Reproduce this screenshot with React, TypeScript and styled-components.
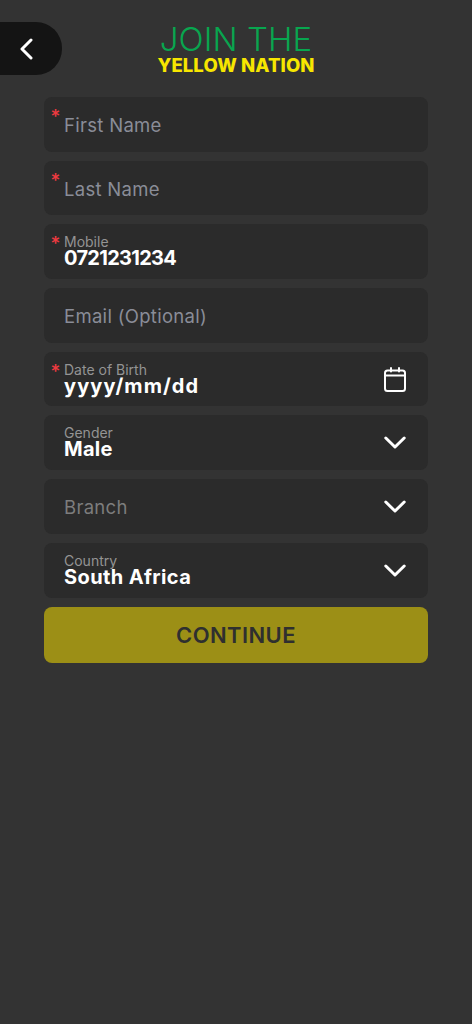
import styled, { createGlobalStyle } from "styled-components";

const GlobalStyle = createGlobalStyle`
  html, body {
    margin: 0;
    padding: 0;
    background: #333333;
  }
  * {
    box-sizing: border-box;
  }
`;

const Page = styled.div`
  width: 472px;
  height: 1024px;
  background: #333333;
  font-family: Inter, "Liberation Sans", sans-serif;
  overflow: hidden;
  padding-top: 22px;
`;

const Header = styled.header`
  position: relative;
  height: 75px;
  display: flex;
  flex-direction: column;
  align-items: center;
`;

const BackButton = styled.button`
  position: absolute;
  left: 0;
  top: 0;
  width: 62px;
  height: 53px;
  background: #141414;
  border: 0;
  border-radius: 0 26px 26px 0;
  display: flex;
  align-items: center;
  padding: 0 0 0 19px;
`;

const Join = styled.h1`
  margin: -1px 0 0;
  color: #08a64f;
  font-size: 33px;
  line-height: 36px;
  font-weight: 300;
  letter-spacing: 0.1px;
`;

const Nation = styled.h2`
  margin: -1px 0 0;
  color: #f7e600;
  font-size: 18.5px;
  line-height: 18px;
  font-weight: 800;
  letter-spacing: 0.1px;
`;

const Form = styled.form`
  margin: 0 44px;
  display: flex;
  flex-direction: column;
  gap: 9px;
`;

const Field = styled.div`
  position: relative;
  height: 54.7px;
  background: #2b2b2b;
  border-radius: 8px;
  padding-left: 20px;
  padding-right: 22px;
  display: flex;
  align-items: center;
  justify-content: space-between;
`;

const Star = styled.span`
  position: absolute;
  left: 6.5px;
  top: 10px;
  color: #ee3a40;
  font-size: 19px;
  line-height: 20px;
  font-weight: 500;
`;

const Placeholder = styled.span<{ $dim?: boolean }>`
  color: ${(p) => (p.$dim ? "#7d7d7d" : "#8a8d98")};
  font-size: 18.5px;
  letter-spacing: 0.3px;
  padding-top: 2px;
`;

const Stack = styled.div`
  display: flex;
  flex-direction: column;
`;

const Label = styled.span`
  color: #949494;
  font-size: 14px;
  line-height: 14px;
`;

const Value = styled.span<{ $spacing?: number }>`
  color: #ffffff;
  font-size: 20px;
  line-height: 19px;
  font-weight: 700;
  letter-spacing: ${(p) => p.$spacing ?? 0.3}px;
`;

const Continue = styled.button`
  height: 56.7px;
  background: #9c8f16;
  border: 0;
  border-radius: 8px;
  color: #2f2f2f;
  font-family: inherit;
  font-size: 22px;
  font-weight: 600;
  letter-spacing: 0.4px;
  padding: 0;
`;

const Chevron = () => (
  <svg width="22" height="13" viewBox="0 0 22 13" fill="none" stroke="#fff" strokeWidth="3" strokeLinecap="round" strokeLinejoin="round">
    <path d="M1.8 2 L11 11 L20.2 2" />
  </svg>
);

const Calendar = () => (
  <svg width="22" height="25" viewBox="0 0 22 25" fill="none" stroke="#fff" strokeWidth="2" strokeLinecap="round" strokeLinejoin="round">
    <rect x="1" y="3.5" width="20" height="20.5" rx="2.5" />
    <path d="M1 8.5 H21 M7 1 V4.5 M15 1 V4.5" />
  </svg>
);

const BackIcon = () => (
  <svg width="14" height="22" viewBox="0 0 14 22" fill="none" stroke="#fff" strokeWidth="3" strokeLinecap="round" strokeLinejoin="round">
    <path d="M12 2 L3 11 L12 20" />
  </svg>
);

export default function App() {
  return (
    <Page>
      <GlobalStyle />
      <Header>
        <BackButton type="button">
          <BackIcon />
        </BackButton>
        <Join>JOIN THE</Join>
        <Nation>YELLOW NATION</Nation>
      </Header>
      <Form>
        <Field>
          <Star>*</Star>
          <Placeholder>First Name</Placeholder>
        </Field>
        <Field>
          <Star>*</Star>
          <Placeholder>Last Name</Placeholder>
        </Field>
        <Field>
          <Star>*</Star>
          <Stack>
            <Label>Mobile</Label>
            <Value $spacing={-0.7}>0721231234</Value>
          </Stack>
        </Field>
        <Field>
          <Placeholder>Email (Optional)</Placeholder>
        </Field>
        <Field>
          <Star>*</Star>
          <Stack>
            <Label>Date of Birth</Label>
            <Value $spacing={1.1}>yyyy/mm/dd</Value>
          </Stack>
          <Calendar />
        </Field>
        <Field>
          <Stack>
            <Label>Gender</Label>
            <Value>Male</Value>
          </Stack>
          <Chevron />
        </Field>
        <Field>
          <Placeholder $dim>Branch</Placeholder>
          <Chevron />
        </Field>
        <Field>
          <Stack>
            <Label>Country</Label>
            <Value $spacing={0.4}>South Africa</Value>
          </Stack>
          <Chevron />
        </Field>
        <Continue type="button">CONTINUE</Continue>
      </Form>
    </Page>
  );
}
